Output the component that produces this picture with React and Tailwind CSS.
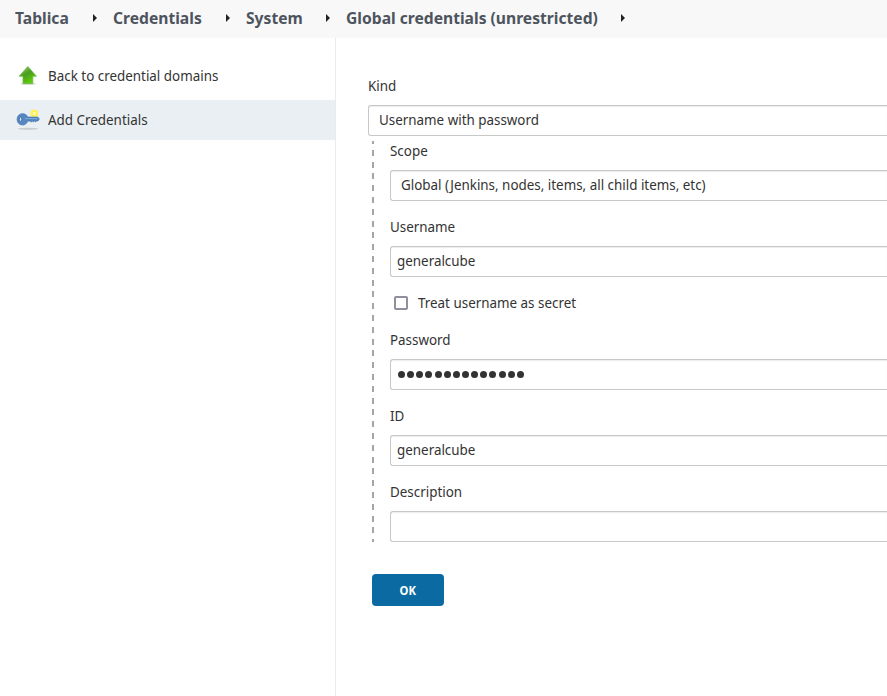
const crumbs = [
  { label: "Tablica", cls: "w-[98px]" },
  { label: "Credentials", cls: "w-[133px]" },
  { label: "System", cls: "w-[99.5px]" },
  { label: "Global credentials (unrestricted)", cls: "w-[295px]" },
];

function UpArrow() {
  return (
    <svg width="24" height="24" viewBox="0 0 24 24" className="-mt-px shrink-0">
      <defs>
        <linearGradient id="green" x1="0" y1="0" x2="0.6" y2="1">
          <stop offset="0" stopColor="#a3cf88" />
          <stop offset=".5" stopColor="#4a9c1e" />
          <stop offset="1" stopColor="#5fd00c" />
        </linearGradient>
      </defs>
      <ellipse cx="12" cy="20.8" rx="8" ry="1.3" fill="#000" opacity=".15" />
      <path d="M11.800 3.500 20.400 13.200H16.800V20.500H7v-7.300H3.200z" fill="url(#green)" stroke="#6ab93c" strokeWidth=".8" />
    </svg>
  );
}

function KeyIcon() {
  return (
    <svg width="24" height="24" viewBox="0 0 24 24" className="-mt-px shrink-0">
      <ellipse cx="12" cy="21.8" rx="10" ry="1" fill="#000" opacity=".14" />
      <circle cx="18.300" cy="6.500" r="4.100" fill="#fff15a" opacity=".8" />
      <circle cx="18.300" cy="6.500" r="2.400" fill="none" stroke="#fff34a" strokeWidth="1.200" />
      <circle cx="18.300" cy="6.500" r="1.400" fill="#fffcc4" />
      <path d="M6.500 6.700c2.700 0 4.500 1.400 5.200 3.400H21.800L23.400 12 22 13.900H20.700L19.700 14.900 18.600 13.900 17.500 15.100 16.300 14.100 15.100 15.100 14 14.100H11.800C11 16.500 9.100 18 6.500 18 3.300 18 1.100 15.500 1.100 12.300S3.300 6.700 6.500 6.700z" fill="#5587c2" stroke="#4374b2" strokeWidth=".7" />
      <path d="M9 11.600H21.500" stroke="#86add8" strokeWidth=".9" />
      <ellipse cx="4.600" cy="12.300" rx="1.200" ry="2.200" fill="#d9e3ec" stroke="#315b8d" strokeWidth=".7" />
    </svg>
  );
}

function Text({ children, className = "" }) {
  return <span className={`inline-block origin-left scale-x-[0.957] ${className}`}>{children}</span>;
}

function Label({ children }) {
  return <label className="block h-5 leading-5"><Text>{children}</Text></label>;
}

function Box({ children, className = "pl-1.5" }) {
  return (
    <div className={`mt-[9px] flex h-[31px] items-center rounded-l-[3px] border border-r-0 border-[#c8c8c8] bg-white pb-0.5 shadow-[inset_0_1px_1px_rgba(0,0,0,0.075)] ${className}`}>
      {children}
    </div>
  );
}

export default function App() {
  return (
    <div className="flex h-[696px] w-[887px] flex-col overflow-hidden whitespace-nowrap bg-white font-['Noto_Sans',sans-serif] text-[14px] text-[#333]">
      <header className="flex h-[38px] shrink-0 items-center bg-[#f8f8f8] pl-[15px] text-[16px] font-bold text-[#4d545d]">
        {crumbs.map((c) => (
          <div key={c.label} className={`flex h-full shrink-0 items-center justify-between pb-0.5 ${c.cls}`}>
            <span className="w-0"><span className="inline-block origin-left scale-x-[0.977]">{c.label}</span></span>
            <svg width="20" height="8" viewBox="0 0 20 8">
              <path d="M0 0 4 4 0 8z" fill="#222" />
            </svg>
          </div>
        ))}
      </header>
      <div className="flex min-h-0 flex-1">
        <aside className="w-[336px] shrink-0 border-r border-[#ebebeb] pt-[18px]">
          <a className="flex h-10 items-center gap-2 pb-px pl-4"><UpArrow /><Text>Back to credential domains</Text></a>
          <a className="mt-1 flex h-10 items-center gap-2 bg-[#e9eff2] pb-px pl-4"><KeyIcon /><Text>Add Credentials</Text></a>
        </aside>
        <main className="min-w-0 flex-1 pl-8 pt-[38px]">
          <Label>Kind</Label>
          <Box className="pl-2.5"><Text>Username with password</Text></Box>
          <div className="ml-1 mt-[5px] flex h-[401px]">
            <div className="h-full w-0.5 shrink-0 bg-[repeating-linear-gradient(to_bottom,#a5a5a5_0_3px,transparent_3px_8.8px,#a5a5a5_8.8px_11.8px)]" />
            <div className="ml-4 flex-1">
              <Label>Scope</Label>
              <Box className="pl-2.5"><Text>Global (Jenkins, nodes, items, all child items, etc)</Text></Box>
              <div className="mt-4"><Label>Username</Label></div>
              <Box><Text>generalcube</Text></Box>
              <div className="mt-4 flex h-5 items-center pl-1">
                <span className="h-3.5 w-3.5 rounded-[2px] border-2 border-[#8f8f9d] bg-white" />
                <Text className="-mt-0.5 ml-2.5">Treat username as secret</Text>
              </div>
              <div className="mt-[17px]"><Label>Password</Label></div>
              <Box className="gap-[2.15px] pl-[7px]">
                {Array.from({ length: 14 }, (_, i) => (
                  <span key={i} className="mt-px h-[7px] w-[7px] rounded-full bg-[#333]" />
                ))}
              </Box>
              <div className="mt-4"><Label>ID</Label></div>
              <Box><Text>generalcube</Text></Box>
              <div className="mt-4"><Label>Description</Label></div>
              <Box />
            </div>
          </div>
          <button className="ml-1 mt-8 block h-8 w-[72px] rounded-[4px] bg-[#0b6aa2] pt-0.5 text-[12px] font-bold text-white"><span className="inline-block scale-x-[0.94]">OK</span></button>
        </main>
      </div>
    </div>
  );
}
